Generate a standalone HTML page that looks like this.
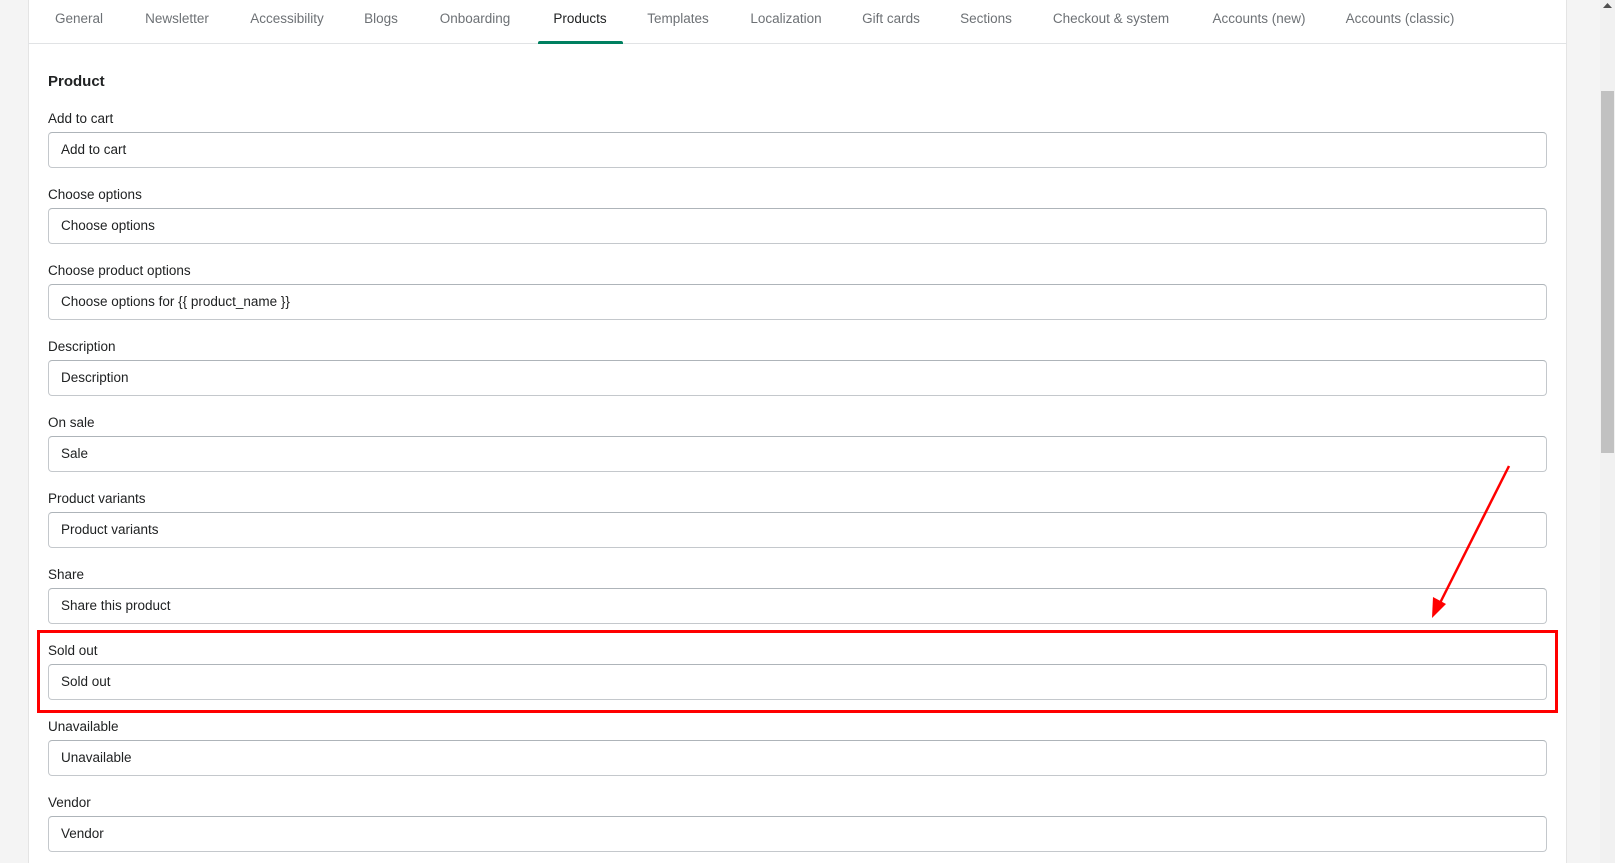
<!DOCTYPE html>
<html><head><meta charset="utf-8"><style>
*{box-sizing:border-box;margin:0;padding:0}
body{width:1615px;height:863px;overflow:hidden;background:#f4f4f4;font-family:"Liberation Sans",sans-serif;color:#202223;position:relative}
.card{position:absolute;left:28px;top:0;width:1539px;height:863px;background:#fff;border-left:1px solid #e4e4e4;border-right:1px solid #e4e4e4}
.tabbar{position:absolute;left:28px;top:0;width:1539px;height:44px;border-bottom:1px solid #e1e3e5}
.tab{position:absolute;top:11px;font-size:13.5px;color:#6d7175;transform:translateX(-50%);white-space:nowrap}
.tab.act{color:#202223}
.ul{position:absolute;left:538px;top:41px;width:85px;height:3px;background:#008060;border-radius:2px 2px 0 0}
h2{position:absolute;left:48px;top:73px;font-size:15px;font-weight:bold;color:#202223}
.lbl{position:absolute;left:48px;font-size:13.5px;color:#202223}
.inp{position:absolute;left:48px;width:1499px;height:36px;border:1px solid #c4c8cc;border-top-color:#aeb4b9;border-radius:4px;font-size:13.5px;padding:9px 12px;color:#202223}
.sb{position:absolute;left:1600px;top:0;width:15px;height:863px;background:#f1f1f1}
.th{position:absolute;left:1601px;top:91px;width:13px;height:362px;background:#c1c1c1}
.red{position:absolute;left:37px;top:630px;width:1521px;height:83px;border:3px solid #f00}
</style></head><body>
<div class="card"></div>
<div class="tabbar"></div>
<div class="tab" style="left:79px">General</div>
<div class="tab" style="left:177px">Newsletter</div>
<div class="tab" style="left:287px">Accessibility</div>
<div class="tab" style="left:381px">Blogs</div>
<div class="tab" style="left:475px">Onboarding</div>
<div class="tab act" style="left:580px">Products</div>
<div class="tab" style="left:678px">Templates</div>
<div class="tab" style="left:786px">Localization</div>
<div class="tab" style="left:891px">Gift cards</div>
<div class="tab" style="left:986px">Sections</div>
<div class="tab" style="left:1111px">Checkout &amp; system</div>
<div class="tab" style="left:1259px">Accounts (new)</div>
<div class="tab" style="left:1400px">Accounts (classic)</div>
<div class="ul"></div>
<h2>Product</h2>
<div class="lbl" style="top:111px">Add to cart</div><div class="inp" style="top:132px">Add to cart</div>
<div class="lbl" style="top:187px">Choose options</div><div class="inp" style="top:208px">Choose options</div>
<div class="lbl" style="top:263px">Choose product options</div><div class="inp" style="top:284px">Choose options for {{ product_name }}</div>
<div class="lbl" style="top:339px">Description</div><div class="inp" style="top:360px">Description</div>
<div class="lbl" style="top:415px">On sale</div><div class="inp" style="top:436px">Sale</div>
<div class="lbl" style="top:491px">Product variants</div><div class="inp" style="top:512px">Product variants</div>
<div class="lbl" style="top:567px">Share</div><div class="inp" style="top:588px">Share this product</div>
<div class="lbl" style="top:643px">Sold out</div><div class="inp" style="top:664px">Sold out</div>
<div class="lbl" style="top:719px">Unavailable</div><div class="inp" style="top:740px">Unavailable</div>
<div class="lbl" style="top:795px">Vendor</div><div class="inp" style="top:816px">Vendor</div>
<div class="red"></div>
<svg style="position:absolute;left:0;top:0" width="1615" height="863"><line x1="1509" y1="466" x2="1440" y2="603" stroke="#f00" stroke-width="2.5"/><polygon points="1432,618 1433,597 1446,604" fill="#f00"/></svg>
<div class="sb"></div><div class="th"></div>
<svg style="position:absolute;left:1603px;top:3px" width="9" height="6"><polygon points="0,5 4.5,0 9,5" fill="#505050"/></svg>
</body></html>
